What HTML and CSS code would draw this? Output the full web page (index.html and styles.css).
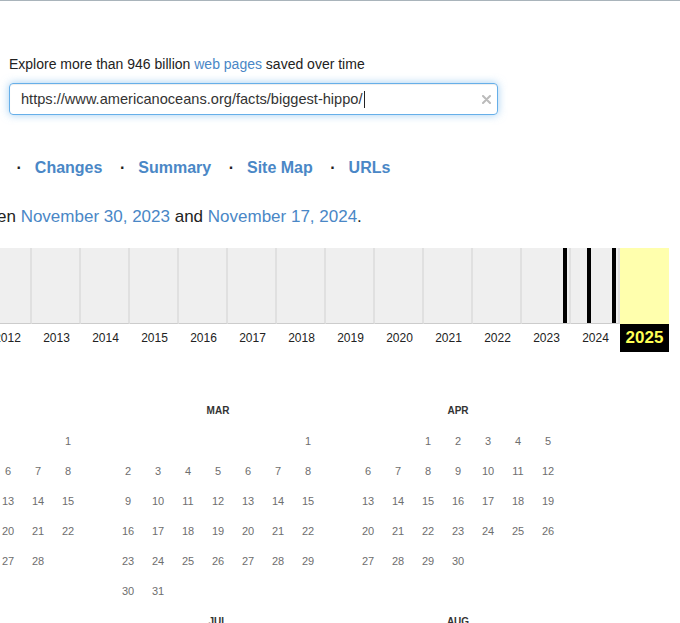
FILE: index.html
```html
<!DOCTYPE html>
<html lang="en">
<head>
    <meta charset="UTF-8">
    <meta name="viewport" content="width=device-width, initial-scale=1.0">
    <title>Wayback Machine</title>
    <link rel="stylesheet" href="styles.css">
</head>
<body>
    <div class="top-rule"></div>

    <div class="search">
        <p class="tagline">Explore more than 946 billion <a href="#">web pages</a> saved over time</p>
        <div class="search-box">
            <span class="search-text">https://www.americanoceans.org/facts/biggest-hippo/</span><span class="caret"></span>
            <button class="clear-btn" aria-label="Clear">
                <svg width="9" height="9" viewBox="0 0 9 9"><path d="M1 1L8 8M8 1L1 8" stroke="#bbb" stroke-width="2" stroke-linecap="round"/></svg>
            </button>
        </div>
    </div>

    <nav class="tabs">
        <span class="dot">·</span><a href="#">Changes</a>
        <span class="dot">·</span><a href="#">Summary</a>
        <span class="dot">·</span><a href="#">Site Map</a>
        <span class="dot">·</span><a href="#">URLs</a>
    </nav>

    <p class="captures">en <a href="#">November 30, 2023</a> and <a href="#">November 17, 2024</a>.</p>

    <div class="timeline">
        <div class="year"><div class="year-bar"></div><div class="year-label">2012</div></div>
        <div class="year"><div class="year-bar"></div><div class="year-label">2013</div></div>
        <div class="year"><div class="year-bar"></div><div class="year-label">2014</div></div>
        <div class="year"><div class="year-bar"></div><div class="year-label">2015</div></div>
        <div class="year"><div class="year-bar"></div><div class="year-label">2016</div></div>
        <div class="year"><div class="year-bar"></div><div class="year-label">2017</div></div>
        <div class="year"><div class="year-bar"></div><div class="year-label">2018</div></div>
        <div class="year"><div class="year-bar"></div><div class="year-label">2019</div></div>
        <div class="year"><div class="year-bar"></div><div class="year-label">2020</div></div>
        <div class="year"><div class="year-bar"></div><div class="year-label">2021</div></div>
        <div class="year"><div class="year-bar"></div><div class="year-label">2022</div></div>
        <div class="year">
            <div class="year-bar"><span class="capture" style="left: 87%"></span></div>
            <div class="year-label">2023</div>
        </div>
        <div class="year">
            <div class="year-bar"><span class="capture" style="left: 34%"></span><span class="capture" style="left: 87%"></span></div>
            <div class="year-label">2024</div>
        </div>
        <div class="year current"><div class="year-bar"></div><div class="year-label">2025</div></div>
    </div>

    <div class="calendar" id="calendar"></div>

    <script src="script.js"></script>
</body>
</html>
```

FILE: styles.css
```css
body {
    margin: 0;
    overflow: hidden;
    font-family: "Liberation Sans", Arial, sans-serif;
    color: #222;
    background-color: #ffffff;
}
a {
    color: #4a87c6;
    text-decoration: none;
}
.top-rule {
    height: 1px;
    background-color: #a9b4bb;
}
.search {
    padding-left: 9px;
}
.tagline {
    margin: 53px 0 0;
    font-size: 14px;
    line-height: 20px;
}
.search-box {
    margin-top: 9px;
    width: 489px;
    height: 32px;
    box-sizing: border-box;
    border: 1px solid #66afe9;
    border-radius: 4px;
    box-shadow: inset 0 1px 1px rgba(0,0,0,0.075), 0 0 8px rgba(102,175,233,0.6);
    display: flex;
    align-items: center;
    padding: 0 4px 0 11px;
    font-size: 14.6px;
    color: #333;
}
.caret {
    width: 1px;
    height: 17px;
    background-color: #222;
    margin-left: 1px;
}
.clear-btn {
    margin-left: auto;
    border: none;
    background: none;
    padding: 0;
    width: 13px;
    height: 13px;
    display: flex;
    align-items: center;
    justify-content: center;
    cursor: pointer;
}
.tabs {
    margin-top: 43px;
    padding-left: 16.5px;
    display: flex;
    align-items: center;
    font-size: 16px;
    font-weight: bold;
    line-height: 20px;
}
.tabs .dot {
    color: #222;
    margin-right: 13px;
}
.tabs a {
    margin-right: 17.5px;
}
.captures {
    margin: 28px 0 0 -3px;
    font-size: 17px;
    line-height: 22px;
}
.timeline {
    display: flex;
    margin: 20px 0 0 -17px;
}
.year {
    width: 49px;
    flex: none;
}
.year-bar {
    position: relative;
    height: 75px;
    background-color: #efefef;
    border-right: 2px solid #e0e0e0;
    border-bottom: 1px solid #cccccc;
}
.capture {
    position: absolute;
    top: 0;
    bottom: 0;
    width: 4px;
    background-color: #000000;
}
.year-label {
    height: 28px;
    line-height: 28px;
    text-align: center;
    font-size: 12px;
    color: #222;
}
.year.current .year-bar {
    background-color: #ffffad;
    border-right: none;
    border-bottom-color: #ffffad;
}
.year.current .year-label {
    background-color: #000000;
    color: #ffff55;
    font-size: 17px;
    font-weight: bold;
}
.calendar {
    display: grid;
    grid-template-columns: repeat(3, 210px);
    column-gap: 30px;
    row-gap: 1px;
    align-items: start;
    margin: 44px 0 0 -127px;
}
.month-name {
    height: 30px;
    line-height: 30px;
    text-align: center;
    font-size: 10px;
    font-weight: bold;
    color: #333;
}
.days {
    display: grid;
    grid-template-columns: repeat(7, 30px);
    grid-auto-rows: 30px;
    font-size: 11px;
    color: #6e6e6e;
}
.day {
    display: flex;
    align-items: center;
    justify-content: center;
}
```

FILE: script.js
```js
// Build the month grids of the 2025 calendar that fit in the view
const calendar = document.querySelector('#calendar');
const year = 2025;
const monthNames = ['JAN', 'FEB', 'MAR', 'APR', 'MAY', 'JUN', 'JUL', 'AUG', 'SEP', 'OCT', 'NOV', 'DEC'];
const shownMonths = [1, 2, 3, 5, 6, 7];

shownMonths.forEach(function (m) {
    let month = document.createElement('div');
    month.className = 'month';

    let name = document.createElement('div');
    name.className = 'month-name';
    name.innerText = monthNames[m];
    month.appendChild(name);

    let days = document.createElement('div');
    days.className = 'days';
    const firstDay = new Date(year, m, 1).getDay();
    const dayCount = new Date(year, m + 1, 0).getDate();

    // empty cells before the 1st
    for (let i = 0; i < firstDay; i++) {
        days.appendChild(document.createElement('div'));
    }
    for (let d = 1; d <= dayCount; d++) {
        let cell = document.createElement('div');
        cell.className = 'day';
        cell.innerText = d;
        days.appendChild(cell);
    }

    month.appendChild(days);
    calendar.appendChild(month);
});
```
